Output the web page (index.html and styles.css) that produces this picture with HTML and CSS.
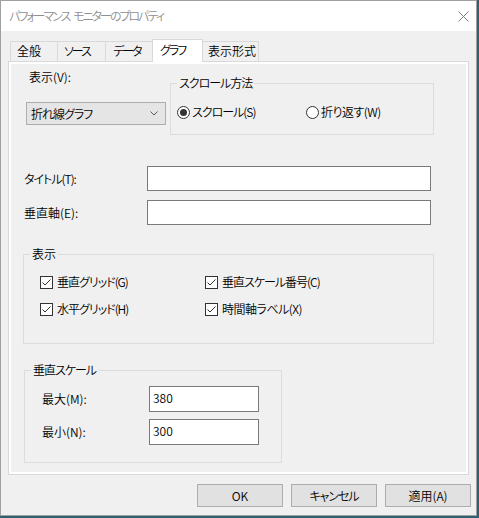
FILE: index.html
```html
<!DOCTYPE html>
<html lang="ja">
<head>
<meta charset="utf-8">
<title>パフォーマンス モニターのプロパティ</title>
<link rel="stylesheet" href="styles.css">
</head>
<body>
<div class="window">
  <header class="titlebar">
    <span class="title">パフォーマンス モニターのプロパティ</span>
    <svg class="close" width="11" height="11" viewBox="0 0 11 11" aria-label="閉じる">
      <path d="M0.5 0.5L10.5 10.5M10.5 0.5L0.5 10.5" stroke="#7d7d7d" stroke-width="1" fill="none"/>
    </svg>
  </header>

  <div class="client">
    <nav class="tabs">
      <div class="tab tab-general">全般</div>
      <div class="tab tab-source kana">ソース</div>
      <div class="tab tab-data kana">データ</div>
      <div class="tab tab-graph kana is-active">グラフ</div>
      <div class="tab tab-format">表示形式</div>
    </nav>

    <div class="panel">
      <div class="page">
        <div class="top-row">
          <div class="view-col">
            <div class="view-label">表示(V):</div>
            <div class="combo">
              <span class="kana">折れ線グラフ</span>
              <svg width="8" height="5" viewBox="0 0 8 5"><path d="M0.5 0.5L4 4L7.5 0.5" fill="none" stroke="#5a5a5a" stroke-width="1"/></svg>
            </div>
          </div>
          <fieldset class="group scroll-group">
            <legend class="kana">スクロール方法</legend>
            <div class="radio-row">
              <label class="radio radio-first">
                <svg width="13" height="13" viewBox="0 0 13 13"><circle cx="6.5" cy="6.5" r="6" fill="#fff" stroke="#333"/><circle cx="6.5" cy="6.5" r="3.5" fill="#333"/></svg>
                <span class="kana">スクロール(S)</span>
              </label>
              <label class="radio">
                <svg width="13" height="13" viewBox="0 0 13 13"><circle cx="6.5" cy="6.5" r="6" fill="#fff" stroke="#333"/></svg>
                <span class="kana-light">折り返す(W)</span>
              </label>
            </div>
          </fieldset>
        </div>

        <div class="text-fields">
          <label class="kana">タイトル(T):</label>
          <input class="field wide" type="text">
          <label>垂直軸(E):</label>
          <input class="field wide" type="text">
        </div>

        <fieldset class="group display-group">
          <legend>表示</legend>
          <div class="check-grid">
            <label class="check">
              <svg width="13" height="13" viewBox="0 0 13 13"><rect x="0.5" y="0.5" width="12" height="12" fill="#fff" stroke="#333"/><path d="M2.5 6.5L5 9L10.5 3.5" fill="none" stroke="#333"/></svg>
              <span class="kana">垂直グリッド(G)</span>
            </label>
            <label class="check">
              <svg width="13" height="13" viewBox="0 0 13 13"><rect x="0.5" y="0.5" width="12" height="12" fill="#fff" stroke="#333"/><path d="M2.5 6.5L5 9L10.5 3.5" fill="none" stroke="#333"/></svg>
              <span class="kana">垂直スケール番号(C)</span>
            </label>
            <label class="check">
              <svg width="13" height="13" viewBox="0 0 13 13"><rect x="0.5" y="0.5" width="12" height="12" fill="#fff" stroke="#333"/><path d="M2.5 6.5L5 9L10.5 3.5" fill="none" stroke="#333"/></svg>
              <span class="kana">水平グリッド(H)</span>
            </label>
            <label class="check">
              <svg width="13" height="13" viewBox="0 0 13 13"><rect x="0.5" y="0.5" width="12" height="12" fill="#fff" stroke="#333"/><path d="M2.5 6.5L5 9L10.5 3.5" fill="none" stroke="#333"/></svg>
              <span class="kana-light">時間軸ラベル(X)</span>
            </label>
          </div>
        </fieldset>

        <fieldset class="group scale-group">
          <legend class="kana">垂直スケール</legend>
          <div class="scale-grid">
            <label>最大(M):</label>
            <input class="field narrow" type="text" value="380">
            <label>最小(N):</label>
            <input class="field narrow" type="text" value="300">
          </div>
        </fieldset>
      </div>
    </div>

    <div class="buttons">
      <button class="btn" type="button">OK</button>
      <button class="btn kana" type="button">キャンセル</button>
      <button class="btn" type="button">適用(A)</button>
    </div>
  </div>
</div>
</body>
</html>
```

FILE: styles.css
```css
* {
  box-sizing: border-box;
}

html,
body {
  margin: 0;
}

body {
  width: 479px;
  height: 518px;
  overflow: hidden;
  background: #2e6170;
  color: #000;
  font-family: "Noto Sans CJK JP", "Noto Sans", sans-serif;
  font-size: 12px;
  font-weight: 350;
  line-height: 16px;
  font-feature-settings: "palt" 1;
}

.kana {
  letter-spacing: -1px;
}

.kana-light {
  letter-spacing: -0.5px;
}

/* dialog frame */
.window {
  width: 477px;
  height: 516px;
  border: 1px solid #a0a0a0;
  background: #f0f0f0;
  display: flex;
  flex-direction: column;
}

.titlebar {
  flex: none;
  height: 30px;
  background: #fff;
  display: flex;
  align-items: center;
  justify-content: space-between;
  padding: 0 7px 0 8px;
}

.title {
  color: #8f8f8f;
  letter-spacing: -2px;
  word-spacing: 3px;
}

.close {
  display: block;
}

.client {
  flex: 1;
  background: #f0f0f0;
}

/* tab strip */
.tabs {
  display: flex;
  align-items: flex-end;
  padding: 8px 0 0 9px;
}

.tab {
  height: 20px;
  border: 1px solid #d9d9d9;
  border-right: none;
  border-bottom: none;
  background: #f0f0f0;
  line-height: 18px;
  padding-left: 6px;
  white-space: nowrap;
}

.tab.kana {
  letter-spacing: -2px;
}

.tab-general { width: 47px; }
.tab-source { width: 48px; }
.tab-data { width: 47px; padding-left: 7px; }
.tab-graph { width: 51px; padding-left: 7px; }
.tab-format {
  width: 56px;
  padding-left: 5px;
  border-right: 1px solid #d9d9d9;
}

.tab.is-active {
  position: relative;
  z-index: 1;
  height: 23px;
  margin-bottom: -1px;
  background: #fff;
  border-right: 1px solid #d9d9d9;
  line-height: 20px;
}

.tab.is-active + .tab {
  border-left: none;
}

.panel {
  margin-left: 7px;
  width: 461px;
  height: 414px;
  border: 1px solid #d9d9d9;
  padding: 2px;
  background: #fff;
}

.page {
  height: 100%;
  background: #f0f0f0;
}

/* group boxes */
.group {
  margin: 0;
  padding: 0;
  min-width: 0;
  border: 1px solid #dcdcdc;
}

.group legend {
  margin-left: 6px;
  padding: 0 2px;
  line-height: 16px;
}

/* view selector + scroll mode */
.top-row {
  display: flex;
  align-items: flex-start;
}

.view-col {
  flex: 0 0 159px;
  padding-top: 5px;
}

.view-label {
  margin-left: 18px;
}

.combo {
  margin: 17px 0 0 15px;
  width: 140px;
  height: 23px;
  border: 1px solid #adadad;
  background: #e5e5e5;
  display: flex;
  align-items: center;
  justify-content: space-between;
  padding: 0 7px 0 4px;
}

.combo svg {
  display: block;
}

.scroll-group {
  margin-top: 11px;
  width: 264px;
}

.radio-row {
  display: flex;
  padding: 13px 0 14px 6px;
}

.radio {
  display: flex;
  align-items: center;
  gap: 2px;
  height: 16px;
  white-space: nowrap;
}

.radio svg,
.check svg {
  display: block;
  flex: none;
}

.radio-first {
  flex: 0 0 129px;
}

/* title / axis fields */
.text-fields {
  margin-top: 31px;
  padding-left: 13px;
  display: grid;
  grid-template-columns: 123px 284px;
  row-gap: 9px;
  align-items: center;
}

.field {
  margin: 0;
  border: 1px solid #7a7a7a;
  background: #fff;
  font: inherit;
  line-height: 16px;
  color: #000;
  outline: none;
  padding: 2px 3px 6px;
}

.field.wide {
  width: 284px;
  height: 25px;
}

.field.narrow {
  width: 110px;
  height: 26px;
}

/* display options */
.display-group {
  margin: 21px 0 0 12px;
  width: 411px;
}

.check-grid {
  display: grid;
  grid-template-columns: 165px auto;
  row-gap: 11px;
  padding: 12px 0 26px 16px;
}

.check {
  display: flex;
  align-items: center;
  gap: 4px;
  height: 16px;
  white-space: nowrap;
}

/* vertical scale */
.scale-group {
  margin: 18px 0 0 13px;
  width: 258px;
}

.scale-grid {
  display: grid;
  grid-template-columns: 107px 110px;
  row-gap: 7px;
  align-items: center;
  padding: 8px 0 17px 17px;
}

/* dialog buttons */
.buttons {
  display: flex;
  justify-content: flex-end;
  gap: 8px;
  padding: 9px 5px 0 0;
}

.btn {
  width: 86px;
  height: 23px;
  margin: 0;
  padding: 0;
  border: 1px solid #adadad;
  background: #e1e1e1;
  color: #000;
  font: inherit;
  line-height: 21px;
  text-align: center;
}
```
